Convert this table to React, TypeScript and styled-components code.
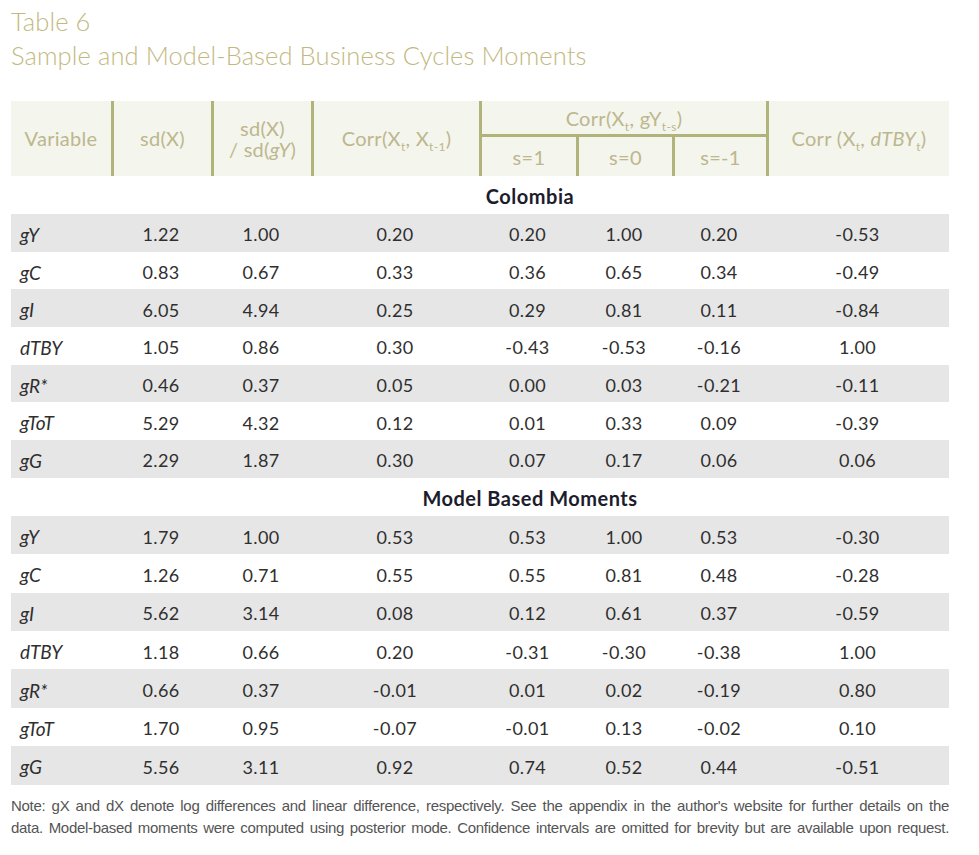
import React from 'react';
import styled, { createGlobalStyle } from 'styled-components';

const khaki = '#c3b97f';
const headText = '#bdb78e';
const rule = '#b0b47a';
const headBg = '#f4f5ec';
const stripe = '#e6e6e6';
const ink = '#2f2f2f';

const cols = '100px 100px 100px 168px 97px 96px 94px 183px';

const GlobalStyle = createGlobalStyle`
	body {
		margin: 0;
		background: #ffffff;
		font-family: Lato, 'Open Sans', sans-serif;
	}
`;

const Page = styled.div`
	padding: 4px 30px 0 11px;
	width: 938px;
`;

const Title = styled.h1`
	margin: 0 0 29px;
	color: ${khaki};
	font-family: Lato, 'Open Sans', sans-serif;
	font-size: 25.5px;
	font-weight: 300;
	line-height: 34px;
	letter-spacing: 0.1px;
`;

const Header = styled.div`
	display: grid;
	grid-template-columns: ${cols};
	grid-template-rows: 36px 39px;
	background: ${headBg};
`;

const HeadCell = styled.div<{ $first?: boolean; $span?: boolean; $group?: boolean }>`
	box-sizing: border-box;
	display: flex;
	align-items: center;
	justify-content: center;
	text-align: center;
	color: ${headText};
	font-size: 20px;
	letter-spacing: 0.3px;
	line-height: 21px;
	border-left: ${p => (p.$first ? 'none' : `3px solid ${rule}`)};
	grid-row: ${p => (p.$span ? '1 / 3' : 'auto')};
	grid-column: ${p => (p.$group ? '5 / 8' : 'auto')};
	border-bottom: ${p => (p.$group ? `3px solid ${rule}` : 'none')};
	padding-top: ${p => (p.$group ? '2px' : '0')};
`;

const SubCell = styled(HeadCell)`
	padding-top: 2px;
`;

const Sub = styled.sub`
	font-size: 12px;
	vertical-align: -5px;
	line-height: 0;
`;

const Section = styled.div`
	display: grid;
	grid-template-columns: 100px 1fr;
	height: 38px;
	align-items: center;
`;

const SectionName = styled.div`
	grid-column: 2;
	text-align: center;
	font-size: 20px;
	font-weight: 700;
	letter-spacing: 0.5px;
	color: #1c1c2c;
	padding-top: 2px;
`;

const Row = styled.div<{ $shade: boolean; $h: number }>`
	display: grid;
	grid-template-columns: ${cols};
	height: ${p => p.$h}px;
	align-items: center;
	background: ${p => (p.$shade ? stripe : 'transparent')};
	color: ${ink};
	font-size: 18px;
`;

const VarCell = styled.div`
	font-style: italic;
	font-size: 19px;
	padding-left: 9px;
	padding-top: 3px;
`;

const NumCell = styled.div`
	text-align: center;
	padding-top: 3px;
	letter-spacing: 0.4px;
`;

const Note = styled.p`
	margin: 10px 0 0;
	color: #555555;
	font-family: 'Liberation Sans', Arial, sans-serif;
	font-size: 15px;
	letter-spacing: -0.3px;
	word-spacing: -0.5px;
	line-height: 22px;
	text-align: justify;
	text-align-last: justify;
`;

type Line = [string, string[]];

const colombia: Line[] = [
	['gY', ['1.22', '1.00', '0.20', '0.20', '1.00', '0.20', '-0.53']],
	['gC', ['0.83', '0.67', '0.33', '0.36', '0.65', '0.34', '-0.49']],
	['gI', ['6.05', '4.94', '0.25', '0.29', '0.81', '0.11', '-0.84']],
	['dTBY', ['1.05', '0.86', '0.30', '-0.43', '-0.53', '-0.16', '1.00']],
	['gR*', ['0.46', '0.37', '0.05', '0.00', '0.03', '-0.21', '-0.11']],
	['gToT', ['5.29', '4.32', '0.12', '0.01', '0.33', '0.09', '-0.39']],
	['gG', ['2.29', '1.87', '0.30', '0.07', '0.17', '0.06', '0.06']]
];

const model: Line[] = [
	['gY', ['1.79', '1.00', '0.53', '0.53', '1.00', '0.53', '-0.30']],
	['gC', ['1.26', '0.71', '0.55', '0.55', '0.81', '0.48', '-0.28']],
	['gI', ['5.62', '3.14', '0.08', '0.12', '0.61', '0.37', '-0.59']],
	['dTBY', ['1.18', '0.66', '0.20', '-0.31', '-0.30', '-0.38', '1.00']],
	['gR*', ['0.66', '0.37', '-0.01', '0.01', '0.02', '-0.19', '0.80']],
	['gToT', ['1.70', '0.95', '-0.07', '-0.01', '0.13', '-0.02', '0.10']],
	['gG', ['5.56', '3.11', '0.92', '0.74', '0.52', '0.44', '-0.51']]
];

const Block = ({ rows, h }: { rows: Line[]; h: number }) => (
	<>
		{rows.map(([name, values], i) => (
			<Row key={name} $shade={i % 2 === 0} $h={h}>
				<VarCell>{name}</VarCell>
				{values.map((v, j) => (
					<NumCell key={j}>{v}</NumCell>
				))}
			</Row>
		))}
	</>
);

const App = () => (
	<Page>
		<GlobalStyle />
		<Title>
			Table 6
			<br />
			Sample and Model-Based Business Cycles Moments
		</Title>
		<Header>
			<HeadCell $first $span>Variable</HeadCell>
			<HeadCell $span>sd(X)</HeadCell>
			<HeadCell $span>
				<span>
					sd(X)
					<br />/ sd(<i>gY</i>)
				</span>
			</HeadCell>
			<HeadCell $span>
				<span>
					Corr(X<Sub>t</Sub>, X<Sub>t-1</Sub>)
				</span>
			</HeadCell>
			<HeadCell $group>
				<span>
					Corr(X<Sub>t</Sub>, gY<Sub>t-s</Sub>)
				</span>
			</HeadCell>
			<HeadCell $span style={{ gridColumn: 8 }}>
				<span>
					Corr (X<Sub>t</Sub>, <i>dTBY</i>
					<Sub>t</Sub>)
				</span>
			</HeadCell>
			<SubCell style={{ gridColumn: 5, gridRow: 2 }}>s=1</SubCell>
			<SubCell style={{ gridColumn: 6, gridRow: 2 }}>s=0</SubCell>
			<SubCell style={{ gridColumn: 7, gridRow: 2 }}>s=-1</SubCell>
		</Header>
		<Section>
			<SectionName>Colombia</SectionName>
		</Section>
		<Block rows={colombia} h={37.7} />
		<Section>
			<SectionName>Model Based Moments</SectionName>
		</Section>
		<Block rows={model} h={38.4} />
		<Note>
			Note: gX and dX denote log differences and linear difference, respectively. See the appendix in the
			author's website for further details on the
			<br />
			data. Model-based moments were computed using posterior mode. Confidence intervals are omitted for
			brevity but are available upon request.
		</Note>
	</Page>
);

export default App;
